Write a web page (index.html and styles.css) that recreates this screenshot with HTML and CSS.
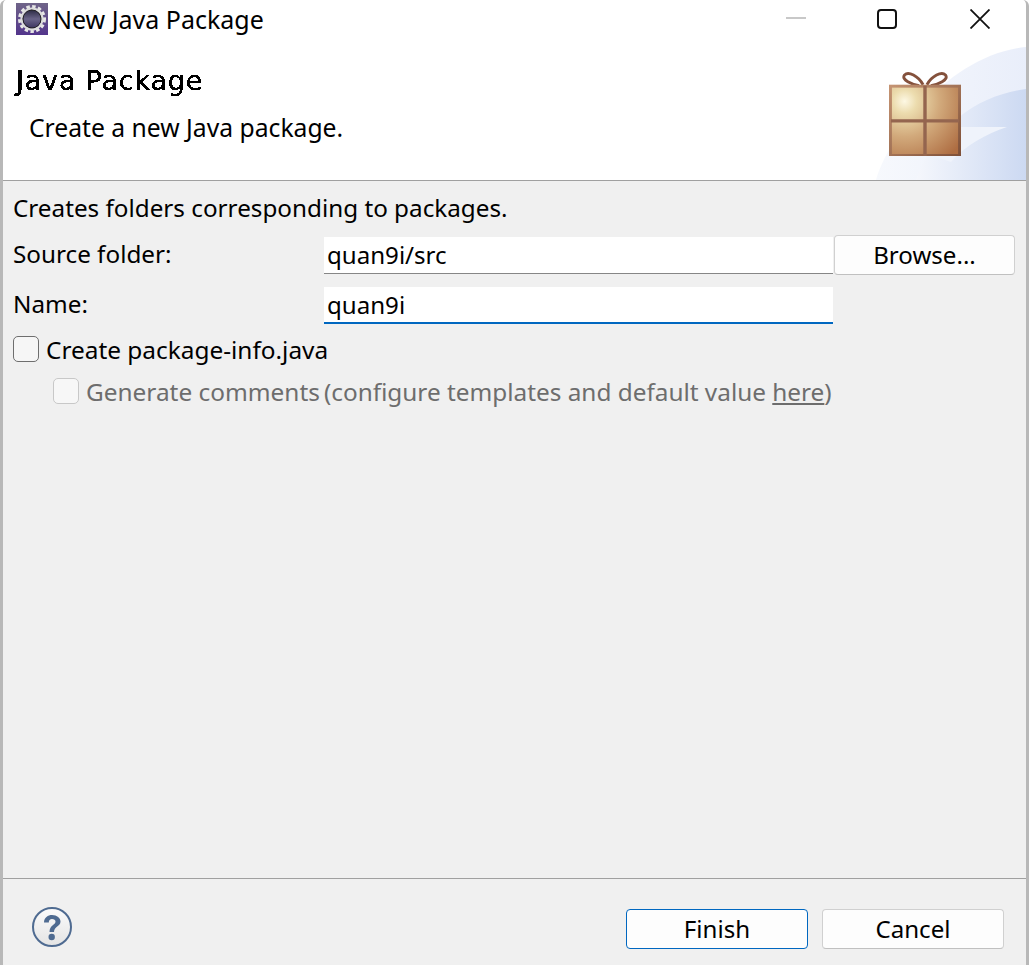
FILE: index.html
```html
<!DOCTYPE html>
<html lang="en">
<head>
	<meta charset="UTF-8">
	<title>New Java Package</title>
	<link rel="stylesheet" href="styles.css">
</head>
<body>
<svg class="defsOnly" width="0" height="0">
	<!-- hard edge on the banner title, it is a bitmap font in the original -->
	<filter id="crisp" x="0" y="0" width="100%" height="100%">
		<feComponentTransfer>
			<feFuncA type="discrete" tableValues="0 1 1 1"/>
		</feComponentTransfer>
	</filter>
</svg>
<div class="window">
	<div class="banner">
		<svg class="bannerBg" width="150" height="133" viewBox="0 0 150 133">
			<defs>
				<linearGradient id="outerBg" x1="0" y1="0" x2="1" y2="0">
					<stop offset="0" stop-color="#f7f9fd"/>
					<stop offset="1" stop-color="#e9eefa"/>
				</linearGradient>
				<linearGradient id="swoosh" x1="0" y1="0" x2="1" y2="0">
					<stop offset="0" stop-color="#f5f7fc"/>
					<stop offset="1" stop-color="#ccd9f2"/>
				</linearGradient>
			</defs>
			<path d="M0 133C10 95 70 8 150 0V133Z" fill="url(#outerBg)"/>
			<path d="M40 133C60 75 105 48 150 42V133Z" fill="url(#swoosh)"/>
			<path d="M60 80L131 80C110 87 90 98 75 115L60 110Z" fill="#eff3fb"/>
		</svg>
		<div class="titleBar">
			<svg class="appIcon" width="32" height="32" viewBox="0 0 32 32">
				<defs>
					<linearGradient id="purple" x1="0" y1="0" x2="0" y2="1">
						<stop offset="0" stop-color="#6f6488"/>
						<stop offset="1" stop-color="#53358c"/>
					</linearGradient>
					<linearGradient id="core" x1="0" y1="0" x2="0" y2="1">
						<stop offset="0" stop-color="#2c2a44"/>
						<stop offset="0.5" stop-color="#6a6488"/>
						<stop offset="1" stop-color="#3d3560"/>
					</linearGradient>
				</defs>
				<rect width="32" height="32" fill="url(#purple)"/>
				<circle cx="16" cy="16" r="11.5" fill="none" stroke="#e6e6e6" stroke-width="5" stroke-dasharray="3.2 2.2"/>
				<circle cx="16" cy="16" r="10.5" fill="none" stroke="#dcdcdc" stroke-width="2"/>
				<circle cx="16" cy="16" r="9" fill="url(#core)" stroke="#222" stroke-width="1"/>
			</svg>
			<span class="windowTitle">New Java Package</span>
			<div class="winButtons">
				<svg class="winMin" width="20" height="20" viewBox="0 0 20 20"><path d="M0 9H20" stroke="#c8c8c8" stroke-width="2"/></svg>
				<svg width="20" height="20" viewBox="0 0 20 20"><rect x="1" y="1" width="18" height="18" rx="3" fill="none" stroke="#111" stroke-width="2"/></svg>
				<svg width="20" height="20" viewBox="0 0 20 20"><path d="M0.5 0.5L19.5 19.5M19.5 0.5L0.5 19.5" stroke="#111" stroke-width="1.8"/></svg>
			</div>
		</div>
		<div class="bannerBody">
			<div class="bannerText">
				<h1 class="pageTitle">Java Package</h1>
				<p class="pageDesc">Create a new Java package.</p>
			</div>
			<svg class="gift" width="72" height="84" viewBox="0 0 74 86" preserveAspectRatio="none">
				<defs>
					<radialGradient id="giftFill" gradientUnits="userSpaceOnUse" cx="16" cy="30" r="72">
						<stop offset="0" stop-color="#fdf8e4"/>
						<stop offset="0.17" stop-color="#ecdcae"/>
						<stop offset="0.5" stop-color="#d2aa7c"/>
						<stop offset="1" stop-color="#ae6d42"/>
					</radialGradient>
					<linearGradient id="giftEdge" x1="0" y1="0" x2="1" y2="1">
						<stop offset="0" stop-color="#c49372"/>
						<stop offset="1" stop-color="#7e5039"/>
					</linearGradient>
				</defs>
				<path d="M35 13C30 4 20-1 16 3C12 8 24 13 31 14M39 13C44 4 54-1 58 3C62 8 50 13 43 14" fill="none" stroke="#84513c" stroke-width="3"/>
				<rect x="1.500" y="14.500" width="71" height="71" fill="url(#giftFill)" stroke="url(#giftEdge)" stroke-width="3"/>
				<path d="M37 14V86M2 50H72" stroke="#94654f" stroke-width="3.500"/>
			</svg>
		</div>
	</div>

	<div class="content">
		<p class="intro">Creates folders corresponding to packages.</p>
		<div class="formGrid">
			<label class="fieldLabel">Source folder:</label>
			<div class="textField">quan9i/src</div>
			<button class="btn browseBtn">Browse...</button>
			<label class="fieldLabel nameLabel">Name:</label>
			<div class="textField focused">quan9i</div>
		</div>
		<div class="checkRow">
			<span class="checkBox"></span>
			<span>Create package-info.java</span>
		</div>
		<div class="checkRow subRow">
			<span class="checkBox disabled"></span>
			<span class="genLabel">Generate comments</span>
			<span class="genHint">(configure templates and default value <u>here</u>)</span>
		</div>
	</div>

	<div class="footer">
		<svg class="helpIcon" width="42" height="42" viewBox="0 0 42 42">
			<defs>
				<linearGradient id="helpBg" x1="0" y1="0" x2="0" y2="1">
					<stop offset="0" stop-color="#fbfbfb"/>
					<stop offset="1" stop-color="#e4e4e4"/>
				</linearGradient>
			</defs>
			<circle cx="21" cy="21" r="19" fill="url(#helpBg)" stroke="#4f6b91" stroke-width="2"/>
			<path d="M13 16.500C13 11.500 17 9 21 9C26 9 29.500 12 29.500 15.500C29.500 20.500 23 20.500 23 26H18.500C18.500 19 24.500 19 24.500 15.500C24.500 14 23 13 21 13C19 13 17.800 14.500 17.800 16.500Z" fill="#4f6b91"/>
			<circle cx="20.700" cy="31" r="3.200" fill="#4f6b91"/>
		</svg>
		<div class="footerBtns">
			<button class="btn footBtn primary">Finish</button>
			<button class="btn footBtn">Cancel</button>
		</div>
	</div>
</div>
</body>
</html>
```

FILE: styles.css
```css
* {
	margin: 0;
	padding: 0;
	box-sizing: border-box;
}

html, body {
	height: 100%;
}

body {
	font-family: "Noto Sans", "Open Sans", sans-serif;
	font-size: 24.4px;
	color: #000;
	background-color: #fff;
}

.defsOnly {
	display: block;
	height: 0;
}

.window {
	height: 965px;
	display: flex;
	flex-direction: column;
	background-color: #f0f0f0;
	border-left: 3px solid #b8b8b8;
	border-right: 3px solid #b8b8b8;
	border-radius: 6px 6px 0 0;
	overflow: hidden;
}

/* top white part */
.banner {
	position: relative;
	height: 181px;
	background-color: #fff;
	border-bottom: 1px solid #a0a0a0;
	overflow: hidden;
}
.bannerBg {
	position: absolute;
	right: 0;
	bottom: 0;
}
.titleBar {
	position: relative;
	display: flex;
	align-items: center;
	height: 38px;
	padding-left: 13px;
}
.appIcon {
	margin-right: 5px;
}
.windowTitle {
	font-size: 25px;
	line-height: 38px;
}
.winButtons {
	display: flex;
	gap: 73px;
	margin-left: auto;
	margin-right: 36px;
}
.winMin {
	margin-right: -2px;
}
.bannerBody {
	position: relative;
	display: flex;
	justify-content: space-between;
	padding-left: 13px;
	padding-right: 65px;
}
.pageTitle {
	font-family: "DejaVu Sans", sans-serif;
	font-size: 27px;
	font-weight: normal;
	letter-spacing: 0.8px;
	line-height: 30px;
	margin-top: 28px;
	filter: url(#crisp);
}
.pageDesc {
	font-size: 24.7px;
	line-height: 34px;
	margin-top: 15px;
	margin-left: 13px;
}
.gift {
	margin-top: 34px;
}

/* form */
.content {
	flex: 1;
	padding: 10px 10px 0;
}
.intro {
	font-size: 24.25px;
	line-height: 34px;
}
.formGrid {
	display: grid;
	grid-template-columns: 311px 509px 182px;
	grid-template-rows: 37px 37px;
	row-gap: 13px;
	margin-top: 12px;
}
.fieldLabel {
	font-size: 24.25px;
	line-height: 34px;
}
.nameLabel {
	grid-column: 1;
}
.textField {
	font-size: 24.1px;
	background-color: #fff;
	border-bottom: 1px solid #868686;
	padding-left: 3px;
	line-height: 36px;
}
.textField.focused {
	border-bottom: 2px solid #0067c0;
}
.btn {
	font-family: inherit;
	font-size: 24.1px;
	color: #000;
	background-color: #fdfdfd;
	border: 1px solid #d0d0d0;
	border-bottom-color: #c0c0c0;
	border-radius: 4px;
}
.browseBtn {
	height: 40px;
	margin-left: 1px;
	margin-top: -2px;
	padding-bottom: 1px;
}
.checkRow {
	display: flex;
	align-items: center;
	height: 34px;
	margin-top: 8px;
}
.subRow {
	padding-left: 40px;
	color: #6d6d6d;
}
.checkBox {
	width: 26px;
	height: 26px;
	margin-right: 7px;
	background-color: #f6f6f6;
	border: 1px solid #6e6e6e;
	border-radius: 5px;
}
.checkBox.disabled {
	background-color: #f7f7f7;
	border-color: #c8c8c8;
}
.genHint {
	font-size: 24.35px;
	margin-left: 4px;
}

/* bottom */
.footer {
	height: 87px;
	display: flex;
	align-items: center;
	justify-content: space-between;
	border-top: 1px solid #a0a0a0;
	padding: 10px 22px 0 28px;
}
.footerBtns {
	display: flex;
	gap: 14px;
	margin-top: 3px;
}
.footBtn {
	width: 182px;
	height: 40px;
}
.primary {
	border: 1px solid #0067c0;
}
```
